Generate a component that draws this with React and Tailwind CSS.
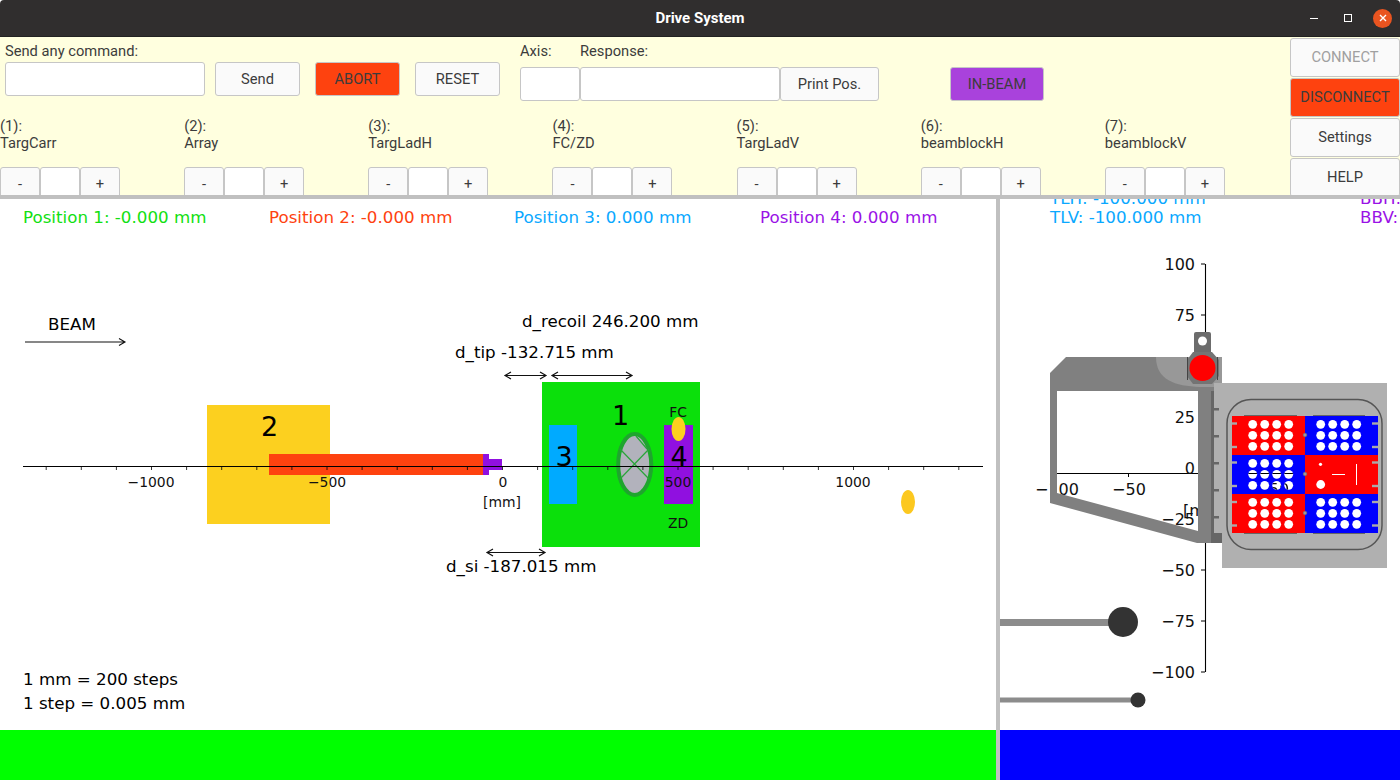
import React from "react";

const uiFont = { fontFamily: "Roboto, sans-serif" };
const chartFont = "'DejaVu Sans', sans-serif";

const axes = [
  { num: "(1):", name: "TargCarr" },
  { num: "(2):", name: "Array" },
  { num: "(3):", name: "TargLadH" },
  { num: "(4):", name: "FC/ZD" },
  { num: "(5):", name: "TargLadV" },
  { num: "(6):", name: "beamblockH" },
  { num: "(7):", name: "beamblockV" },
];

const Btn = ({ children, className = "" }) => (
  <button
    type="button"
    className={`border border-[#c6c6c6] rounded-[3px] bg-[#fafafa] text-[#3c3c3c] text-[14.7px] flex items-center justify-center ${className}`}
  >
    {children}
  </button>
);

const Field = ({ className = "" }) => (
  <input
    type="text"
    readOnly
    className={`border border-[#c6c6c6] rounded-[3px] bg-white ${className}`}
  />
);

const Arrow = ({ x1, x2, y }) => (
  <path
    d={`M${x1} ${y}H${x2}M${x1 + 6} ${y - 3.5}L${x1} ${y}L${x1 + 6} ${y + 3.5}M${x2 - 6} ${y - 3.5}L${x2} ${y}L${x2 - 6} ${y + 3.5}`}
    fill="none"
    stroke="#111"
    strokeWidth="1.2"
  />
);

const LeftChart = () => {
  const minor = [];
  for (let i = -13; i <= 13; i++) minor.push(502.5 + i * 35.1);
  return (
    <svg viewBox="0 199 996 531" className="w-[996px] h-[531px] block" fontFamily={chartFont}>
      <g fontSize="16.7">
        <text x="23" y="223" fill="#12e012">Position 1: -0.000 mm</text>
        <text x="269" y="223" fill="#fe420f">Position 2: -0.000 mm</text>
        <text x="514" y="223" fill="#0aa8ff">Position 3: 0.000 mm</text>
        <text x="760" y="223" fill="#9a12e6">Position 4: 0.000 mm</text>
      </g>

      <text x="48" y="330" fontSize="16.7" fill="#000">BEAM</text>
      <path d="M25 342H125M119 338.5L125 342L119 345.5" fill="none" stroke="#111" strokeWidth="1.1" />

      <rect x="207" y="405" width="123" height="119" fill="#fcd01f" />
      <rect x="542" y="382" width="158" height="165" fill="#0be00b" />
      <rect x="549" y="425" width="28" height="79" fill="#00aaff" />
      <rect x="664" y="425" width="29" height="79" fill="#9010e0" />
      <ellipse cx="634.7" cy="464.5" rx="16.5" ry="30.5" fill="#b2b2bc" stroke="#1fa52e" strokeWidth="4" />
      <path d="M620 449L649 479M649 449L620 479M636 436L647 449" stroke="#2aa53a" strokeWidth="1.2" fill="none" />
      <ellipse cx="678.5" cy="429" rx="7" ry="12" fill="#fcd01f" />
      <ellipse cx="908" cy="502" rx="7" ry="12" fill="#fcc81f" />

      <rect x="269" y="454" width="214" height="21" fill="#fe420f" />
      <rect x="483" y="454" width="6" height="21" fill="#9010e0" />
      <rect x="489" y="459" width="13" height="11" fill="#9010e0" />

      <line x1="23" x2="983" y1="466.5" y2="466.5" stroke="#000" strokeWidth="1.2" />
      {minor.map((x) => (
        <line key={x} x1={x} x2={x} y1="466" y2="470" stroke="#000" strokeWidth="0.8" />
      ))}

      <g fontSize="13.9" textAnchor="middle" fill="#111">
        <text x="151" y="487">−1000</text>
        <text x="327" y="487">−500</text>
        <text x="503" y="487">0</text>
        <text x="678" y="487">500</text>
        <text x="853" y="487">1000</text>
        <text x="502" y="507">[mm]</text>
        <text x="678" y="417">FC</text>
        <text x="678" y="528">ZD</text>
      </g>

      <g fontSize="27" textAnchor="middle" fill="#000">
        <text x="269.5" y="435.5">2</text>
        <text x="620.5" y="424.5">1</text>
        <text x="564" y="465.5">3</text>
        <text x="679" y="465.5">4</text>
      </g>

      <Arrow x1={505} x2={546} y={375.5} />
      <Arrow x1={552} x2={632} y={375.5} />
      <Arrow x1={487} x2={545} y={552.5} />

      <g fontSize="16.7" fill="#000">
        <text x="522" y="327">d_recoil 246.200 mm</text>
        <text x="455" y="358">d_tip -132.715 mm</text>
        <text x="446" y="572">d_si -187.015 mm</text>
        <text x="23" y="685">1 mm = 200 steps</text>
        <text x="23" y="709">1 step = 0.005 mm</text>
      </g>
    </svg>
  );
};

const rowsY = [
  [424.3, 435.3, 446.3],
  [463.3, 474.3, 485.3],
  [502.3, 513.3, 524.3],
];
const leftX = [1252.7, 1264.7, 1276.7, 1288.7];
const rightX = [1320.7, 1332.7, 1344.7, 1356.7];

const holes = [];
rowsY.forEach((ys, r) => {
  ys.forEach((y) => {
    leftX.forEach((x) => holes.push([x, y]));
    if (r !== 1) rightX.forEach((x) => holes.push([x, y]));
  });
});

const RightChart = () => {
  const yTicks = [264, 315, 366, 417, 468, 519, 570, 621, 672];
  const sideTabs = [423.5, 447, 462.5, 486, 502, 525.5];
  return (
    <svg viewBox="1000 199 400 531" className="w-[400px] h-[531px] block" fontFamily={chartFont}>
      <defs>
        <clipPath id="throughHoles">
          {holes.map(([x, y]) => (
            <circle key={`${x}-${y}`} cx={x} cy={y} r="4.4" />
          ))}
        </clipPath>
      </defs>

      <g fontSize="16.7">
        <text x="1050" y="204" fill="#0aa8ff">TLH: -100.000 mm</text>
        <text x="1050" y="223" fill="#0aa8ff">TLV: -100.000 mm</text>
        <text x="1360" y="204" fill="#9a12e6">BBH:</text>
        <text x="1360" y="223" fill="#9a12e6">BBV:</text>
      </g>

      <line x1="1205.5" x2="1205.5" y1="264" y2="672" stroke="#000" strokeWidth="1.1" />
      {yTicks.map((y) => (
        <line key={y} x1="1201" x2="1205" y1={y} y2={y} stroke="#000" strokeWidth="1" />
      ))}
      <line x1="1050" x2="1205" y1="473.5" y2="473.5" stroke="#000" strokeWidth="1.1" />
      <line x1="1128.5" x2="1128.5" y1="473" y2="477" stroke="#000" strokeWidth="1" />

      <g fontSize="16" fill="#111" textAnchor="end">
        <text x="1195" y="270">100</text>
        <text x="1195" y="321">75</text>
        <text x="1195" y="423">25</text>
        <text x="1195" y="474">0</text>
        <text x="1195" y="525">−25</text>
        <text x="1195" y="576">−50</text>
        <text x="1195" y="627">−75</text>
        <text x="1195" y="678">−100</text>
      </g>
      <g fontSize="16" fill="#111" textAnchor="middle">
        <text x="1057" y="495">−100</text>
        <text x="1129" y="495">−50</text>
        <text x="1183" y="516" textAnchor="start">[mm]</text>
      </g>

      {/* frame */}
      <path
        d="M1050 373L1066 357H1222V543H1197L1050 503ZM1057 391V493L1198 531V391Z"
        fill="#808080"
        fillRule="evenodd"
      />
      <path d="M1156 357H1222V387H1200C1175 386 1156 380 1156 357Z" fill="#989898" />
      <rect x="1211" y="391" width="3" height="152" fill="#666" />
      <rect x="1214" y="533" width="8" height="10" fill="#666" />

      {/* top pin */}
      <rect x="1194" y="332" width="17" height="30" rx="2" fill="#6c6c6c" />
      <circle cx="1202.5" cy="341" r="4.5" fill="#fff" />
      <path d="M1193 352H1212L1219 360V376L1212 384H1193L1187 376V360Z" fill="#747474" />
      <path d="M1187.5 357V380M1217.5 357V380" stroke="#444" strokeWidth="1" />
      <circle cx="1202.5" cy="368" r="13" fill="#ff0000" />

      {/* target plate */}
      <path d="M1214 383H1387V568H1222V533H1214Z" fill="#b0b0b0" />
      <rect x="1227" y="399.5" width="155" height="150" rx="24" fill="none" stroke="#555" strokeWidth="1.5" />
      {[409, 436, 463, 490, 517].map((y) => (
        <rect key={y} x="1214" y={y - 1} width="5" height="2.5" fill="#666" />
      ))}

      <rect x="1232" y="416" width="73" height="39" fill="#ff0000" />
      <rect x="1305" y="416" width="73" height="39" fill="#0000ff" />
      <rect x="1232" y="455" width="73" height="39" fill="#0000ff" />
      <rect x="1305" y="455" width="73" height="39" fill="#ff0000" />
      <rect x="1232" y="494" width="73" height="39" fill="#ff0000" />
      <rect x="1305" y="494" width="73" height="39" fill="#0000ff" />
      <path d="M1244 415.5H1297M1313 415.5H1365M1244 533.5H1297M1313 533.5H1365" stroke="#666" strokeWidth="1" />

      {holes.map(([x, y]) => (
        <circle key={`${x}-${y}`} cx={x} cy={y} r="4.4" fill="#fff" />
      ))}
      <g clipPath="url(#throughHoles)">
        <line x1="1240" x2="1300" y1="473.5" y2="473.5" stroke="#000" strokeWidth="1.1" />
        <text x="1279" y="495" fontSize="16" fill="#111" textAnchor="middle">50</text>
      </g>

      <circle cx="1320.5" cy="464.3" r="1.6" fill="#fff" />
      <circle cx="1320.7" cy="484.5" r="4.4" fill="#fff" />
      <path d="M1332 474.5H1345M1356.5 464V485" stroke="#fff" strokeWidth="1" />

      {sideTabs.map((y) => (
        <g key={y}>
          <rect x="1232" y={y - 1.2} width="5" height="2.4" fill="#aaa" />
          <rect x="1372" y={y - 1.2} width="6" height="2.4" fill="#aaa" />
        </g>
      ))}
      {[435, 474, 513].map((y) => (
        <circle key={y} cx="1305" cy={y} r="1.8" fill="#999" stroke="#777" strokeWidth="0.6" />
      ))}

      {/* lower rods */}
      <rect x="1000" y="619" width="122" height="7" fill="#8c8c8c" />
      <circle cx="1123" cy="622" r="15" fill="#333" />
      <rect x="1000" y="697.5" width="137" height="5" fill="#8c8c8c" />
      <circle cx="1138" cy="700" r="7.5" fill="#333" />
    </svg>
  );
};

export default function App() {
  return (
    <div className="w-[1400px] h-[780px] flex flex-col overflow-hidden bg-white" style={uiFont}>
      {/* Title bar */}
      <div className="h-[37px] shrink-0 grid grid-cols-[1fr_auto_1fr] items-center bg-[#302e2e] rounded-t-[4px] border-b border-[#222]">
        <div />
        <div className="text-white font-bold text-[15px]">Drive System</div>
        <div className="flex items-center justify-end pr-[8px]">
          <div className="w-[8px] h-[1px] bg-white" />
          <div className="w-[8px] h-[8px] border border-white ml-[26px]" />
          <div className="w-[19px] h-[19px] rounded-full bg-[#e95420] flex items-center justify-center ml-[21px]">
            <svg width="8" height="8" viewBox="0 0 8 8">
              <path d="M1 1L7 7M7 1L1 7" stroke="#fff" strokeWidth="1.4" />
            </svg>
          </div>
        </div>
      </div>

      {/* Controls */}
      <div className="h-[158px] shrink-0 flex overflow-hidden bg-[#ffffdf] text-[#3c3c3c] text-[14.7px]">
        <div className="w-[1290px] flex flex-col">
          <div className="h-[80px] shrink-0 flex pl-[5px] items-start">
            <div className="w-[200px] pt-[5px]">
              <div className="h-[18px] leading-[18px] mb-[2px]">Send any command:</div>
              <Field className="w-[200px] h-[34px]" />
            </div>
            <Btn className="w-[85px] h-[34px] mt-[25px] ml-[10px]">Send</Btn>
            <Btn className="w-[85px] h-[34px] mt-[25px] ml-[15px] !bg-[#fe420f]">ABORT</Btn>
            <Btn className="w-[85px] h-[34px] mt-[25px] ml-[15px]">RESET</Btn>
            <div className="w-[60px] ml-[20px] pt-[5px]">
              <div className="h-[18px] leading-[18px] mb-[7px]">Axis:</div>
              <Field className="w-[60px] h-[34px]" />
            </div>
            <div className="w-[200px] pt-[5px]">
              <div className="h-[18px] leading-[18px] mb-[7px]">Response:</div>
              <Field className="w-[200px] h-[34px]" />
            </div>
            <Btn className="w-[99px] h-[34px] mt-[30px]">Print Pos.</Btn>
            <Btn className="w-[94px] h-[34px] mt-[30px] ml-[71px] !bg-[#a942dc]">IN-BEAM</Btn>
          </div>

          <div className="grid grid-cols-7 w-[1289px] pt-[1px]">
            {axes.map((a) => (
              <div key={a.name}>
                <div className="h-[17px] leading-[17px]">{a.num}</div>
                <div className="h-[17px] leading-[17px]">{a.name}</div>
                <div className="flex mt-[15px]">
                  <Btn className="w-[40px] h-[34px]">-</Btn>
                  <Field className="w-[40px] h-[34px]" />
                  <Btn className="w-[40px] h-[34px]">+</Btn>
                </div>
              </div>
            ))}
          </div>
        </div>

        <div className="w-[110px] flex flex-col gap-[1px] pt-[1px]">
          <Btn className="h-[39px] shrink-0 !text-[#a0a0a0]">CONNECT</Btn>
          <Btn className="h-[39px] shrink-0 !bg-[#fe420f]">DISCONNECT</Btn>
          <Btn className="h-[39px] shrink-0">Settings</Btn>
          <Btn className="h-[39px] shrink-0">HELP</Btn>
        </div>
      </div>

      <div className="h-[4px] shrink-0 bg-[#c0c0c0]" />

      {/* Plots */}
      <div className="flex flex-1 min-h-0">
        <div className="w-[996px] flex flex-col">
          <LeftChart />
          <div className="flex-1 bg-[#00ff00]" />
        </div>
        <div className="w-[4px] bg-[#c0c0c0]" />
        <div className="w-[400px] flex flex-col overflow-hidden">
          <RightChart />
          <div className="flex-1 bg-[#0000ff]" />
        </div>
      </div>
    </div>
  );
}
